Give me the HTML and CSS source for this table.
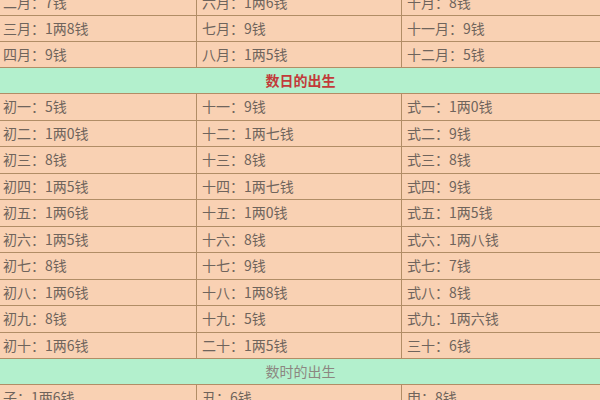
FILE: index.html
```html
<!DOCTYPE html>
<html lang="zh">
<head>
<meta charset="utf-8">
<link rel="stylesheet" href="styles.css">
</head>
<body>
<div class="viewport">
<table class="chart">
  <colgroup><col class="c1"><col class="c2"><col class="c3"></colgroup>
  <tbody>
    <tr class="top"><td>二月：7钱</td><td>六月：1两6钱</td><td>十月：8钱</td></tr>
    <tr class="top"><td>三月：1两8钱</td><td>七月：9钱</td><td>十一月：9钱</td></tr>
    <tr class="top"><td>四月：9钱</td><td>八月：1两5钱</td><td>十二月：5钱</td></tr>
    <tr class="head"><th colspan="3" class="title-red">数日的出生</th></tr>
    <tr><td>初一：5钱</td><td>十一：9钱</td><td>式一：1两0钱</td></tr>
    <tr><td>初二：1两0钱</td><td>十二：1两七钱</td><td>式二：9钱</td></tr>
    <tr><td>初三：8钱</td><td>十三：8钱</td><td>式三：8钱</td></tr>
    <tr><td>初四：1两5钱</td><td>十四：1两七钱</td><td>式四：9钱</td></tr>
    <tr><td>初五：1两6钱</td><td>十五：1两0钱</td><td>式五：1两5钱</td></tr>
    <tr><td>初六：1两5钱</td><td>十六：8钱</td><td>式六：1两八钱</td></tr>
    <tr><td>初七：8钱</td><td>十七：9钱</td><td>式七：7钱</td></tr>
    <tr><td>初八：1两6钱</td><td>十八：1两8钱</td><td>式八：8钱</td></tr>
    <tr><td>初九：8钱</td><td>十九：5钱</td><td>式九：1两六钱</td></tr>
    <tr><td>初十：1两6钱</td><td>二十：1两5钱</td><td>三十：6钱</td></tr>
    <tr class="head"><th colspan="3" class="title-grey">数时的出生</th></tr>
    <tr><td>子：1两6钱</td><td>丑：6钱</td><td>申：8钱</td></tr>
  </tbody>
</table>
</div>
</body>
</html>
```
FILE: styles.css
```css
html, body {
  margin: 0;
  padding: 0;
  background: #f9d1b3;
}
.viewport {
  width: 600px;
  height: 400px;
  overflow: hidden;
  background: #f9d1b3;
}
.chart {
  border-collapse: collapse;
  table-layout: fixed;
  width: 606px;
  margin-left: -3px;
  margin-top: -11px;
  font-family: "Noto Sans CJK SC", "Noto Sans", sans-serif;
  font-size: 14px;
  color: #6f645c;
}
.c1 { width: 199px; }
.c2 { width: 205px; }
.c3 { width: 202px; }
.chart td, .chart th {
  border: 1px solid #b18d66;
  padding: 0 0 0 5px;
  height: 25px;
  line-height: 25px;
  white-space: nowrap;
  overflow: hidden;
  background: #f9d1b3;
  text-align: left;
  font-weight: normal;
}
.chart tr.top td {
  height: 25px;
}
.chart td {
  height: 25.5px;
}
.chart th {
  background: #b3f0cd;
  text-align: center;
  padding: 0;
  height: 25px;
}
.title-red {
  color: #c23a3a;
  font-weight: bold !important;
}
.title-grey {
  color: #8c8680;
}
```
